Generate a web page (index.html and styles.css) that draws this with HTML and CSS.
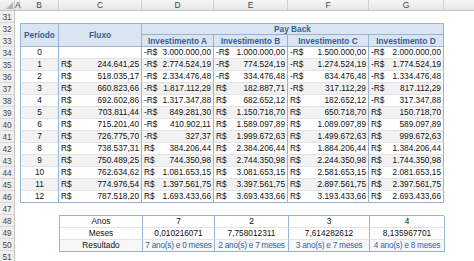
FILE: index.html
```html
<!DOCTYPE html>
<html>
<head>
<meta charset="utf-8">
<link rel="stylesheet" href="styles.css">
</head>
<body>
<div class="sheet">
  <div class="colhdr">
    <div class="corner"><span class="tri"></span></div>
    <div class="ch w-a">A</div>
    <div class="ch w-b">B</div>
    <div class="ch w-c">C</div>
    <div class="ch w-d">D</div>
    <div class="ch w-e">E</div>
    <div class="ch w-f">F</div>
    <div class="ch w-g">G</div>
    <div class="ch w-rest"></div>
  </div>
  <div class="body">
    <div class="rowhdr">
      <div class="rh">31</div><div class="rh">32</div><div class="rh">33</div><div class="rh">34</div>
      <div class="rh">35</div><div class="rh">36</div><div class="rh">37</div><div class="rh">38</div>
      <div class="rh">39</div><div class="rh">40</div><div class="rh">41</div><div class="rh">42</div>
      <div class="rh">43</div><div class="rh">44</div><div class="rh">45</div><div class="rh">46</div>
      <div class="rh">47</div><div class="rh">48</div><div class="rh">49</div><div class="rh">50</div>
      <div class="rh">51</div>
    </div>
    <div class="cells">
      <div class="blank-row"></div>
      <div class="main">
        <div class="hd span2 first">Período</div>
        <div class="hd span2">Fluxo</div>
        <div class="hd payback">Pay Back</div>
        <div class="hd sub">Investimento A</div>
        <div class="hd sub">Investimento B</div>
        <div class="hd sub">Investimento C</div>
        <div class="hd sub last">Investimento D</div>
      </div>
      <div class="rows" id="rows"></div>
      <div class="blank-row"></div>
      <div class="summary">
        <div class="sc label">Anos</div><div class="sc">7</div><div class="sc">2</div><div class="sc">3</div><div class="sc last">4</div>
        <div class="sc label">Meses</div><div class="sc">0,010216071</div><div class="sc">7,758012311</div><div class="sc">7,614282612</div><div class="sc last">8,135967701</div>
        <div class="sc label bot">Resultado</div><div class="sc res bot">7 ano(s) e 0 meses</div><div class="sc res bot">2 ano(s) e 7 meses</div><div class="sc res bot">3 ano(s) e 7 meses</div><div class="sc res bot last">4 ano(s) e 8 meses</div>
      </div>
    </div>
  </div>
</div>
<script>
var data = [
 ["0", null, "-R$|3.000.000,00", "-R$|1.000.000,00", "-R$|1.500.000,00", "-R$|2.000.000,00"],
 ["1", "R$|244.641,25", "-R$|2.774.524,19", "-R$|774.524,19", "-R$|1.274.524,19", "-R$|1.774.524,19"],
 ["2", "R$|518.035,17", "-R$|2.334.476,48", "-R$|334.476,48", "-R$|834.476,48", "-R$|1.334.476,48"],
 ["3", "R$|660.823,66", "-R$|1.817.112,29", "R$|182.887,71", "-R$|317.112,29", "-R$|817.112,29"],
 ["4", "R$|692.602,86", "-R$|1.317.347,88", "R$|682.652,12", "R$|182.652,12", "-R$|317.347,88"],
 ["5", "R$|703.811,44", "-R$|849.281,30", "R$|1.150.718,70", "R$|650.718,70", "R$|150.718,70"],
 ["6", "R$|715.201,40", "-R$|410.902,11", "R$|1.589.097,89", "R$|1.089.097,89", "R$|589.097,89"],
 ["7", "R$|726.775,70", "-R$|327,37", "R$|1.999.672,63", "R$|1.499.672,63", "R$|999.672,63"],
 ["8", "R$|738.537,31", "R$|384.206,44", "R$|2.384.206,44", "R$|1.884.206,44", "R$|1.384.206,44"],
 ["9", "R$|750.489,25", "R$|744.350,98", "R$|2.744.350,98", "R$|2.244.350,98", "R$|1.744.350,98"],
 ["10", "R$|762.634,62", "R$|1.081.653,15", "R$|3.081.653,15", "R$|2.581.653,15", "R$|2.081.653,15"],
 ["11", "R$|774.976,54", "R$|1.397.561,75", "R$|3.397.561,75", "R$|2.897.561,75", "R$|2.397.561,75"],
 ["12", "R$|787.518,20", "R$|1.693.433,66", "R$|3.693.433,66", "R$|3.193.433,66", "R$|2.693.433,66"]
];
var host = document.getElementById("rows");
data.forEach(function (r, i) {
  var row = document.createElement("div");
  row.className = "row" + (i % 2 === 1 ? " band" : "") + (i === data.length - 1 ? " lastrow" : "");
  var p = document.createElement("div");
  p.className = "c per";
  p.textContent = r[0];
  row.appendChild(p);
  for (var k = 1; k < 6; k++) {
    var c = document.createElement("div");
    c.className = "c money" + (k === 5 ? " last" : "");
    if (r[k]) {
      var parts = r[k].split("|");
      var a = document.createElement("span");
      a.textContent = parts[0];
      var b = document.createElement("span");
      b.textContent = parts[1];
      c.appendChild(a);
      c.appendChild(b);
    }
    row.appendChild(c);
  }
  host.appendChild(row);
});
</script>
</body>
</html>
```
FILE: styles.css
```css
* { box-sizing: border-box; }
html, body { margin: 0; padding: 0; background: #fff; }
body {
  font-family: "Liberation Sans", Arial, sans-serif;
  font-size: 8.3px;
  color: #111;
  width: 474px;
  height: 261px;
  overflow: hidden;
}
.sheet { width: 474px; }

.colhdr {
  display: flex;
  height: 11px;
  background: linear-gradient(#f7f7f7, #e6e6e6);
  border-bottom: 1px solid #c6c6c6;
}
.corner {
  width: 15px;
  position: relative;
  border-right: 1px solid #c6c6c6;
}
.tri {
  position: absolute;
  right: 1px;
  bottom: 1px;
  width: 0;
  height: 0;
  border-left: 7px solid transparent;
  border-bottom: 7px solid #b4b4b4;
}
.ch {
  border-right: 1px solid #d0d0d0;
  color: #444;
  font-size: 8.5px;
  line-height: 10px;
  text-align: center;
}
.w-a { width: 5px; }
.w-b { width: 39px; }
.w-c { width: 83px; }
.w-d { width: 72px; }
.w-e { width: 74px; }
.w-f { width: 81px; }
.w-g { width: 75px; }
.w-rest { flex: 1; border-right: 0; }

.body { display: flex; }
.rowhdr {
  width: 15px;
  background: #efefef;
  border-right: 1px solid #c6c6c6;
}
.rh {
  height: 12px;
  line-height: 12px;
  text-align: center;
  color: #4a4a4a;
  font-size: 8.3px;
  border-bottom: 1px solid #dadada;
}
.cells { flex: 1; padding-left: 5px; }
.blank-row { height: 12px; }

.main {
  display: grid;
  grid-template-columns: 39px 83px 72px 74px 81px 75px;
  grid-template-rows: 12px 12px;
  width: 424px;
}
.hd {
  background: #dbe5f1;
  color: #366092;
  font-weight: bold;
  display: flex;
  align-items: center;
  justify-content: center;
  border-top: 1px solid #95b3d7;
  border-right: 1px solid #95b3d7;
  border-bottom: 1px solid #95b3d7;
}
.hd.first { border-left: 1px solid #95b3d7; }
.span2 { grid-row: span 2; }
.payback {
  grid-column: 3 / span 4;
}
.sub { border-top: 0; }

.rows { width: 424px; }
.row {
  display: grid;
  grid-template-columns: 39px 83px 72px 74px 81px 75px;
  height: 12px;
}
.row.band { background: #f2f2f2; }
.c {
  border-right: 1px solid #95b3d7;
  border-bottom: 1px solid #e2e2e2;
  line-height: 11px;
  white-space: nowrap;
}
.row.lastrow .c { border-bottom: 1px solid #95b3d7; }
.per {
  border-left: 1px solid #95b3d7;
  text-align: center;
}
.money {
  display: flex;
  justify-content: space-between;
  padding: 0 2px;
}

.summary {
  margin-left: 39px;
  display: grid;
  grid-template-columns: 83px 72px 74px 81px 75px;
  grid-auto-rows: 12px;
  width: 385px;
  border-top: 1px solid #95b3d7;
  border-left: 1px solid #95b3d7;
}
.sc {
  text-align: center;
  line-height: 11px;
  border-right: 1px solid #95b3d7;
  border-bottom: 1px solid #e2e2e2;
  white-space: nowrap;
  overflow: hidden;
}
.sc.bot { border-bottom: 1px solid #95b3d7; background: #f7f7f7; }
.sc.res { color: #2f63ad; letter-spacing: -0.25px; }
```
